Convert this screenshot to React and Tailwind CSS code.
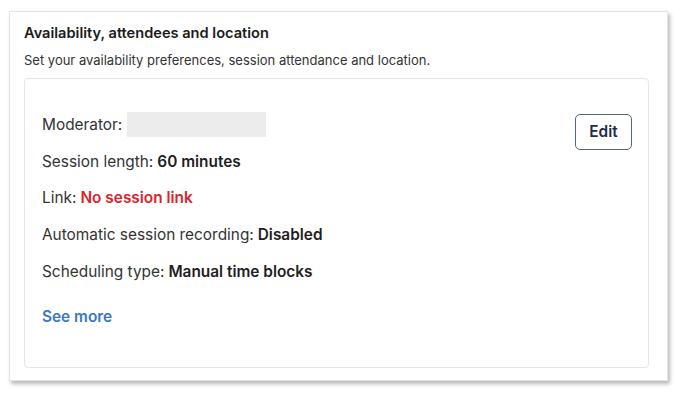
function Row({ label, children, className = "" }) {
    return (
        <div className={"flex h-[36.8px] items-center text-[15.4px] text-[#333] " + className}>
            <span>{label}</span>
            {children}
        </div>
    );
}

export default function App() {
    return (
        <div className="w-[684px] h-[395px] bg-white pt-[11px] pl-[9px]" style={{ fontFamily: "Inter, 'Noto Sans', sans-serif" }}>
            <div className="w-[659px] h-[370px] bg-white border border-[#e4e4e4] shadow-[2px_3px_4px_rgba(0,0,0,0.28)] pl-[14px] pr-[18px] pt-[12px]">
                <h2 className="text-[14.6px] font-semibold text-[#1b1b1b] leading-[18px]">
                    Availability, attendees and location
                </h2>
                <p className="mt-[10px] text-[13px] text-[#333] leading-[17px]">
                    Set your availability preferences, session attendance and location.
                </p>

                <div className="mt-[9px] h-[290px] border border-[#e6e6e6] rounded-[4px] flex justify-between pl-[17px] pr-[16px] pt-[27px]">
                    <div className="flex flex-col">
                        <Row label="Moderator:">
                            <span className="ml-[5px] w-[139px] h-[25px] bg-[#ececec]"></span>
                        </Row>
                        <Row label="Session length:">
                            <span className="ml-[4px] font-semibold text-[#1e1e1e]">60 minutes</span>
                        </Row>
                        <Row label="Link:">
                            <span className="ml-[4px] font-semibold text-[#d8262c]">No session link</span>
                        </Row>
                        <Row label="Automatic session recording:">
                            <span className="ml-[4px] font-semibold text-[#1e1e1e]">Disabled</span>
                        </Row>
                        <Row label="Scheduling type:">
                            <span className="ml-[4px] font-semibold text-[#1e1e1e]">Manual time blocks</span>
                        </Row>
                        <div className="mt-[8px] flex h-[37px] items-center">
                            <a className="text-[15.4px] font-semibold text-[#3a77c6]">See more</a>
                        </div>
                    </div>
                    <div className="pt-[8px]">
                        <button className="w-[57px] h-[36px] rounded-[5px] border border-[#56677d] text-[15.4px] font-semibold text-[#1d2c48]">
                            Edit
                        </button>
                    </div>
                </div>
            </div>
        </div>
    );
}
